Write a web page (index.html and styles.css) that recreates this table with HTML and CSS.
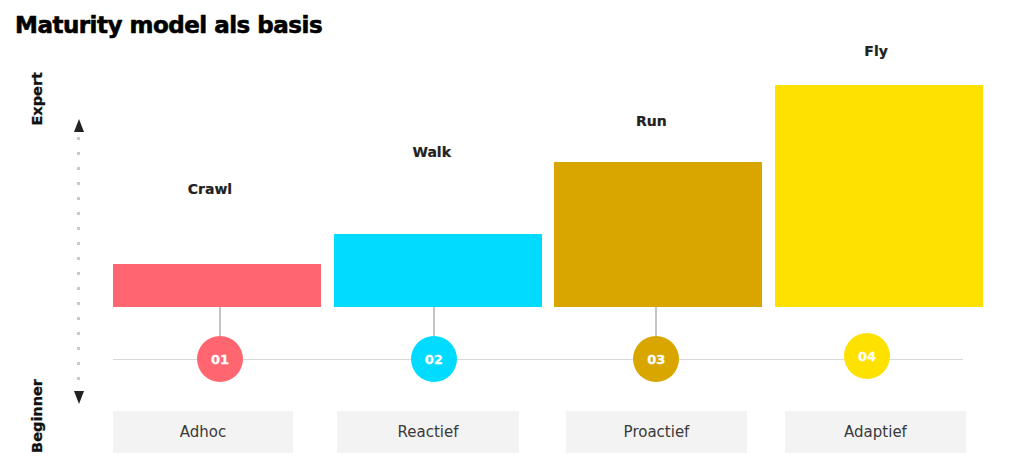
FILE: index.html
```html
<!DOCTYPE html>
<html lang="nl">
<head>
<meta charset="utf-8">
<title>Maturity model als basis</title>
<link rel="stylesheet" href="styles.css">
</head>
<body>
<h1 class="title">Maturity model als basis</h1>
<div class="main">
  <div class="axis">
    <div class="axis-labels">
      <span class="vlabel">Expert</span>
      <span class="vlabel">Beginner</span>
    </div>
    <div class="axis-arrow">
      <span class="tri-up"></span>
      <span class="dots"></span>
      <span class="tri-down"></span>
    </div>
  </div>
  <div class="plot">
    <div class="bars">
      <div class="col">
        <span class="lbl lbl-crawl">Crawl</span>
        <span class="bar bar-crawl"></span>
      </div>
      <div class="col">
        <span class="lbl lbl-walk">Walk</span>
        <span class="bar bar-walk"></span>
      </div>
      <div class="col">
        <span class="lbl lbl-run">Run</span>
        <span class="bar bar-run"></span>
      </div>
      <div class="col">
        <span class="lbl lbl-fly">Fly</span>
        <span class="bar bar-fly"></span>
      </div>
    </div>
    <div class="timeline">
      <div class="tick tick-1"><span class="stem"></span><span class="dot dot-crawl">01</span></div>
      <div class="tick tick-2"><span class="stem"></span><span class="dot dot-walk">02</span></div>
      <div class="tick tick-3"><span class="stem"></span><span class="dot dot-run">03</span></div>
      <div class="tick tick-4"><span class="dot dot-fly">04</span></div>
    </div>
    <div class="boxes">
      <div class="box box-1">Adhoc</div>
      <div class="box box-2">Reactief</div>
      <div class="box box-3">Proactief</div>
      <div class="box box-4">Adaptief</div>
    </div>
  </div>
</div>
</body>
</html>
```
FILE: styles.css
```css
* { box-sizing: border-box; }
html, body { margin: 0; padding: 0; background: #fff; }
body {
  font-family: "DejaVu Sans", "Open Sans", Arial, sans-serif;
  color: #222;
  width: 1024px;
  height: 468px;
  overflow: hidden;
}
.title {
  margin: 0;
  padding: 10px 0 0 15px;
  height: 40px;
  font-size: 23px;
  line-height: 30px;
  font-weight: 800;
  color: #000;
  letter-spacing: -0.5px;
  -webkit-text-stroke: 0.6px #000;
}
.main {
  display: flex;
  height: 428px;
}
.axis {
  width: 113px;
  display: flex;
  padding-top: 32px;
}
.axis-labels {
  margin-left: 29px;
  width: 16px;
  height: 381px;
  display: flex;
  flex-direction: column;
  justify-content: space-between;
}
.vlabel {
  writing-mode: vertical-rl;
  transform: rotate(180deg);
  font-size: 14.5px;
  font-weight: 700;
  line-height: 16px;
  color: #111;
  -webkit-text-stroke: 0.3px #111;
}
.axis-arrow {
  margin-left: 28px;
  padding-top: 47px;
  width: 11px;
  display: flex;
  flex-direction: column;
  align-items: center;
}
.tri-up, .tri-down {
  width: 0;
  height: 0;
  border-left: 5px solid transparent;
  border-right: 5px solid transparent;
}
.tri-up { border-bottom: 13px solid #222; }
.tri-down { border-top: 13px solid #222; }
.dots {
  width: 3px;
  height: 250px;
  margin: 5px 0 4px;
  background: repeating-linear-gradient(to bottom, #c9c9c9 0 3px, transparent 3px 15px);
}
.plot {
  display: flex;
  flex-direction: column;
}
.bars {
  display: grid;
  grid-template-columns: repeat(4, 208px);
  column-gap: 12.7px;
  align-items: end;
  height: 267px;
}
.col {
  display: flex;
  flex-direction: column;
  align-items: center;
}
.lbl {
  font-size: 14px;
  line-height: 18px;
  font-weight: 700;
  color: #222;
  -webkit-text-stroke: 0.2px #222;
}
.lbl-crawl { margin-bottom: 66px; margin-left: -14px; }
.lbl-walk { margin-bottom: 73px; margin-left: -12px; }
.lbl-run { margin-bottom: 32px; margin-left: -14px; }
.lbl-fly { margin-bottom: 25px; margin-left: -6px; }
.bar { display: block; width: 100%; }
.bar-crawl { height: 43px; background: #ff6670; }
.bar-walk { height: 73px; background: #00dbff; }
.bar-run { height: 145px; background: #d9a600; }
.bar-fly { height: 222px; background: #ffe100; }
.timeline {
  display: grid;
  grid-template-columns: repeat(4, 208px);
  column-gap: 12.7px;
  height: 104px;
  background: linear-gradient(#d8d8d8, #d8d8d8) no-repeat 0 52px / 850px 1px;
}
.tick {
  display: flex;
  flex-direction: column;
  align-items: center;
}
.tick-1 { padding-left: 6px; }
.tick-2 { padding-right: 8px; }
.tick-3 { padding-right: 4px; }
.tick-4 { padding-right: 24px; padding-top: 26px; }
.stem {
  display: block;
  width: 2px;
  height: 29px;
  background: #c4c4c4;
}
.dot {
  width: 46px;
  height: 46px;
  border-radius: 50%;
  display: flex;
  align-items: center;
  justify-content: center;
  color: #fff;
  font-size: 13px;
  font-weight: 700;
  -webkit-text-stroke: 0.3px #fff;
}
.dot-crawl { background: #ff6670; }
.dot-walk { background: #00dbff; }
.dot-run { background: #d9a600; }
.dot-fly { background: #ffe100; }
.boxes {
  display: flex;
  height: 42px;
}
.box {
  height: 42px;
  background: #f3f3f3;
  display: flex;
  align-items: center;
  justify-content: center;
  font-size: 15px;
  color: #3a3a3a;
}
.box-1 { width: 180px; }
.box-2 { width: 182px; margin-left: 44px; }
.box-3 { width: 181px; margin-left: 47px; }
.box-4 { width: 181px; margin-left: 38px; }
```
